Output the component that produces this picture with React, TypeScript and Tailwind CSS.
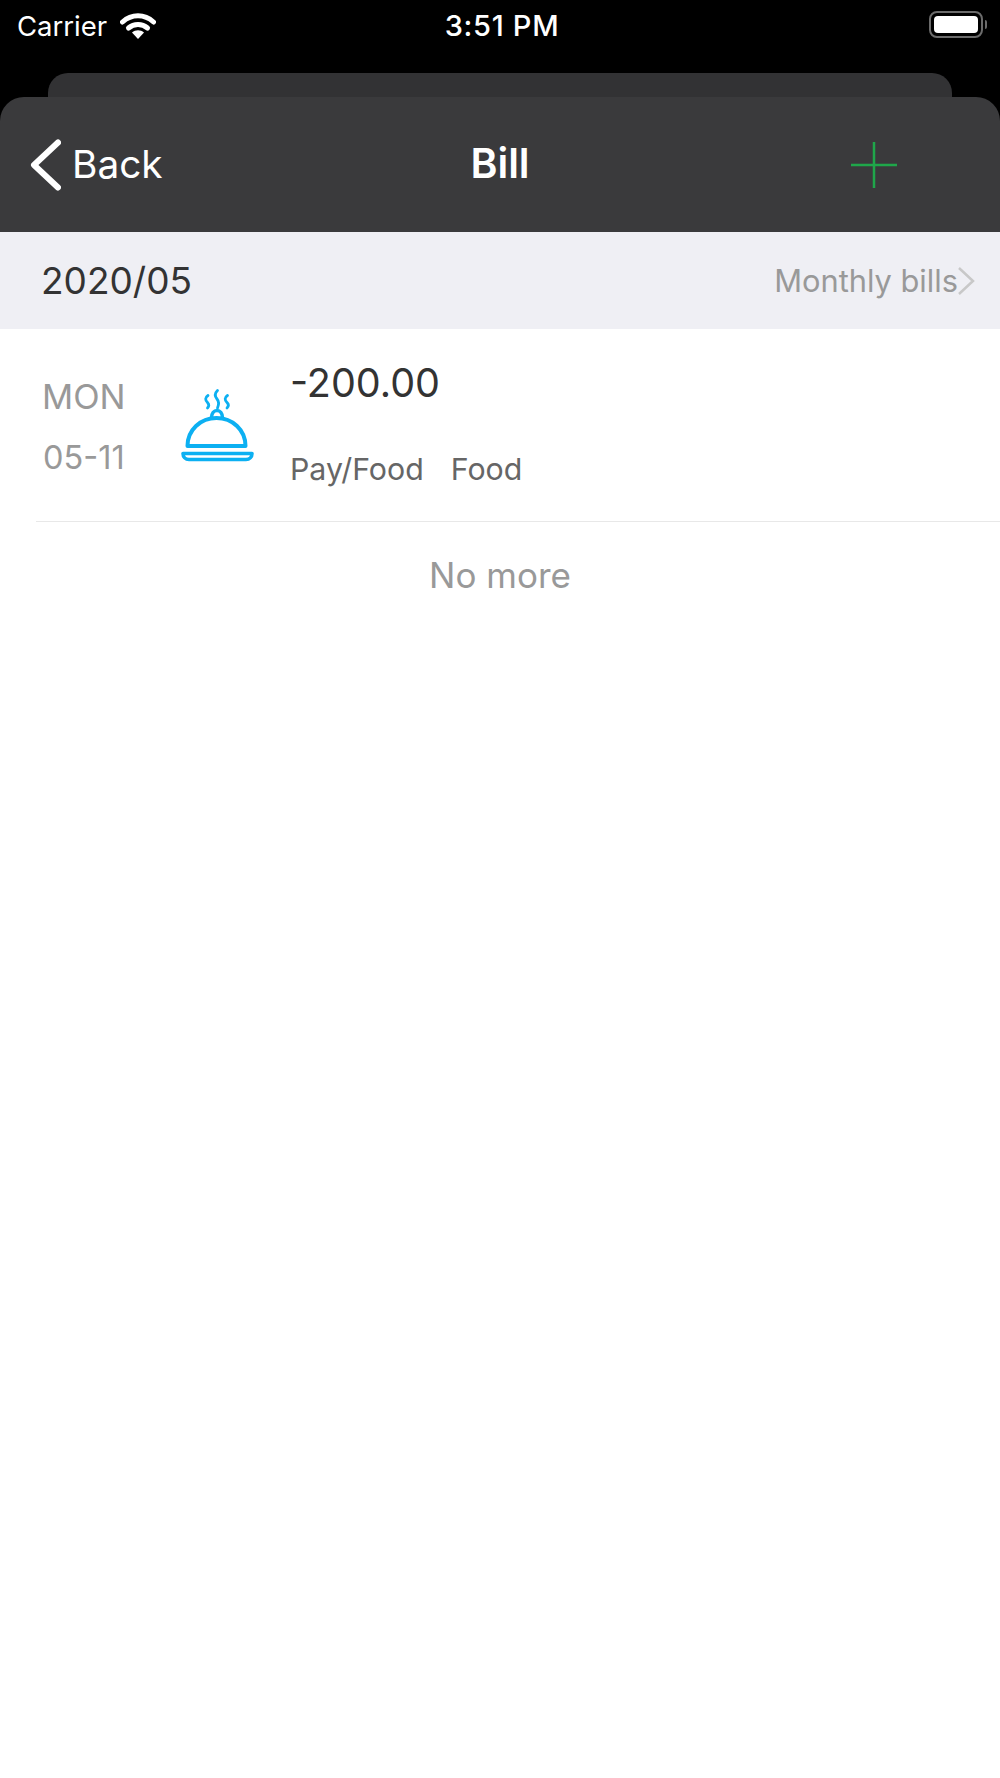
const sans = "font-['Inter','Liberation_Sans',sans-serif]";

function WifiIcon() {
  return (
    <svg width="36" height="28" viewBox="0 0 36 28" fill="none">
      <path d="M2.500 10C11.500 1.800 24.500 1.800 33.500 10" stroke="white" strokeWidth="5" strokeLinecap="round" />
      <path d="M8.500 16C14 11.200 22 11.200 27.500 16" stroke="white" strokeWidth="5" strokeLinecap="round" />
      <path d="M12 20.500C15.500 17.500 20.500 17.500 24 20.500L18 27Z" fill="white" />
    </svg>
  );
}

function ClocheIcon() {
  return (
    <svg width="76" height="74" viewBox="0 0 76 74" fill="none" stroke="#0cb0f2" strokeWidth="4" strokeLinecap="round" strokeLinejoin="round">
      <path d="M28 7.500C25 9.500 25 12 27.500 14.500C29.500 16.500 29 18.500 27.500 20" strokeWidth="2.800" />
      <path d="M37.500 2.500C34.500 5.500 34.500 8 37 11C39.500 14 39 16.500 37.500 20" strokeWidth="2.800" />
      <path d="M47.500 7.500C44.500 9.500 44.500 12 47 14.500C49 16.500 48.500 18.500 47 20" strokeWidth="2.800" />
      <path d="M31.500 30c0-10 11-10 11 0" strokeWidth="3.600" />
      <path d="M7.500 58c0-16 13-28 29-28s29 12 29 28Z" />
      <path d="M3 65.500h69c0 3.500-2.500 6-6 6H9c-3.500 0-6-2.500-6-6Z" strokeWidth="3.600" />
    </svg>
  );
}

export default function App() {
  return (
    <div className={`min-h-[1778px] bg-white ${sans}`}>
      {/* Status bar */}
      <div className="bg-black">
        <div className="flex h-[73px] items-start justify-between pl-[17px] pr-[13px] pt-[10px] text-white">
          <div className="flex w-[300px] items-center gap-[13px]">
            <span className="text-[27.500px] leading-[32px]">Carrier</span>
            <WifiIcon />
          </div>
          <span className="text-[29px] font-medium leading-[32px] tracking-[0.7px]">3:51 PM</span>
          <div className="flex w-[300px] justify-end pt-[1px]">
            <div className="flex items-center gap-[2px]">
              <div className="h-[27px] w-[54px] rounded-[8px] border-2 border-[#6b6b6b] p-[3px]">
                <div className="h-full w-full rounded-[4px] bg-white" />
              </div>
              <div className="h-[9px] w-[2px] rounded-r-full bg-[#6b6b6b]" />
            </div>
          </div>
        </div>
        <div className="mx-[48px] h-[24px] rounded-t-[20px] bg-[#323234]" />
        {/* Nav bar */}
        <div className="grid h-[135px] grid-cols-3 items-center rounded-t-[24px] bg-[#3a3a3c] text-white">
          <div className="flex items-center gap-[11px] pl-[29px]">
            <svg width="32" height="52" viewBox="0 0 32 52" fill="none">
              <path d="M29 3.500L5 26L29 48.500" stroke="white" strokeWidth="6" strokeLinecap="round" strokeLinejoin="round" />
            </svg>
            <span className="pb-[2px] text-[38.800px] leading-[48px]">Back</span>
          </div>
          <div className="pb-[3px] text-center text-[41px] font-semibold leading-[48px]">Bill</div>
          <div className="flex justify-end pr-[102px]">
            <svg width="48" height="48" viewBox="0 0 48 48">
              <path d="M24 1V47M1 24H47" stroke="#1fa64a" strokeWidth="2.500" />
            </svg>
          </div>
        </div>
      </div>

      {/* Month band */}
      <div className="flex h-[97px] items-center justify-between bg-[#efeff4] pl-[41px] pr-[25px]">
        <span className="text-[37px] leading-[44px] text-[#333333]">2020/05</span>
        <div className="flex items-center">
          <span className="text-[30.800px] leading-[36px] text-[#999999]">Monthly bills</span>
          <svg width="17" height="28" viewBox="0 0 17 28" fill="none">
            <path d="M1 1L15 14L1 27" stroke="#c8c8c8" strokeWidth="2.500" />
          </svg>
        </div>
      </div>

      {/* Bill row */}
      <div className="ml-[36px] flex h-[193px] border-b-[1.500px] border-[#e8e8e8]">
        <div className="w-[144px] pl-[6px] pt-[48px] text-[#999999]">
          <div className="text-[34.500px] leading-[40px]">MON</div>
          <div className="mt-[23px] pl-[1px] text-[32.500px] leading-[36px]">05-11</div>
        </div>
        <div className="w-[110px] pt-[59px]">
          <ClocheIcon />
        </div>
        <div className="pt-[30px]">
          <div className="text-[39.500px] leading-[48px] text-[#333333]">-200.00</div>
          <div className="mt-[44px] flex gap-[27px] text-[30.300px] leading-[36px] text-[#666666]">
            <span>Pay/Food</span>
            <span>Food</span>
          </div>
        </div>
      </div>

      <div className="pt-[32px] text-center text-[35px] leading-[42px] text-[#999999]">No more</div>
    </div>
  );
}
